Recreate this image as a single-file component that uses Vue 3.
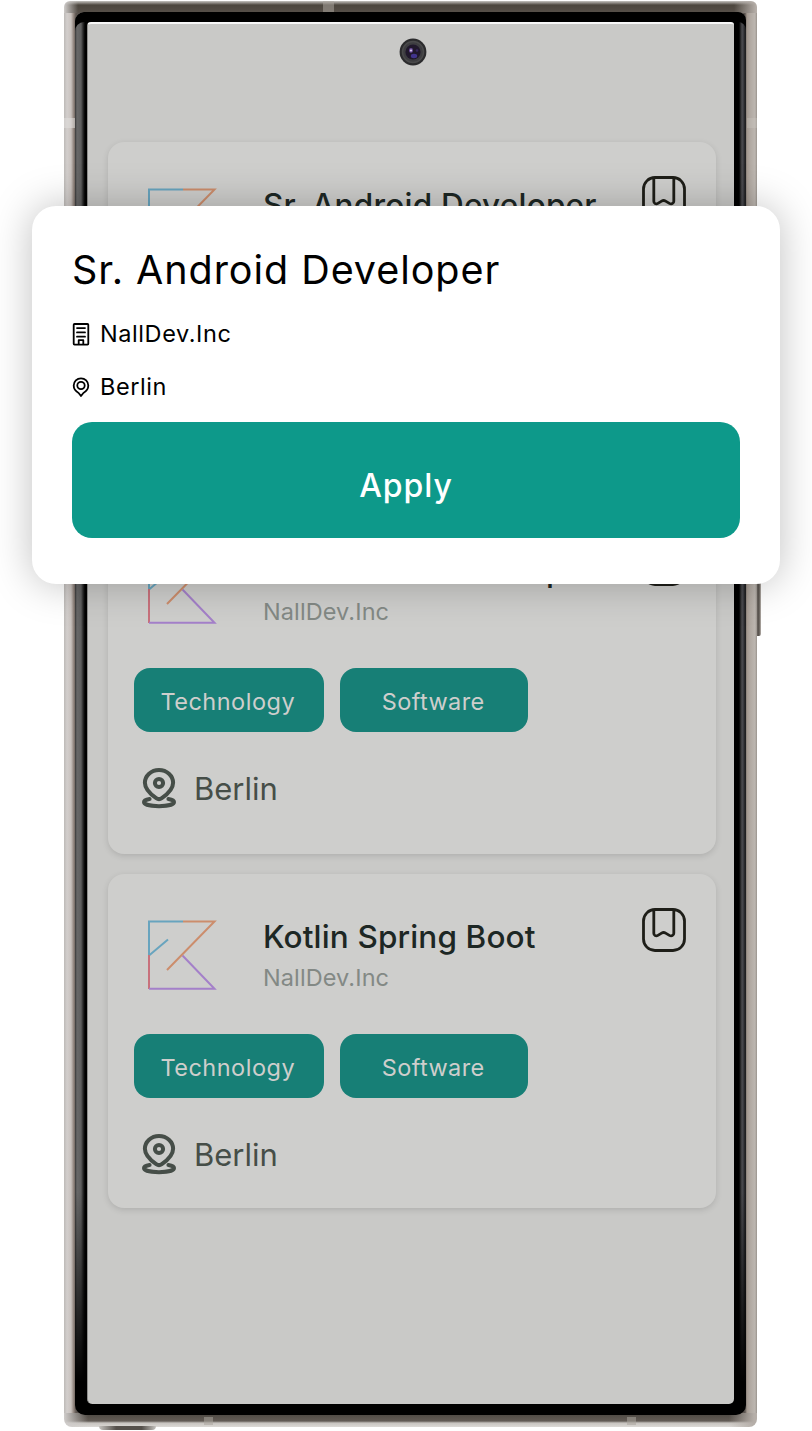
<script setup>
const jobs = [
  { title: 'Sr. Android Developer', cls: 'wide', size: 'tall' },
  { title: 'Sr. Android Developer', cls: 'wide', size: 'tall' },
  { title: 'Kotlin Spring Boot', cls: 'kotlin', size: 'short' },
]
</script>

<template>
  <main class="stage">
    <section class="phone">
      <span class="antenna top"></span>
      <span class="antenna left"></span>
      <span class="antenna right"></span>
      <span class="antenna low-left"></span>
      <span class="antenna low-right"></span>
      <span class="power"></span>
      <span class="tray"></span>
      <div class="bezel">
        <div class="screen">
          <svg class="camera" width="28" height="28" viewBox="0 0 28 28">
            <circle cx="14" cy="14" r="13.4" fill="#2b2b2d" />
            <circle cx="14" cy="14" r="10.5" fill="#3d3d40" stroke="#4a4a4b" stroke-width="1.5" />
            <circle cx="14" cy="14" r="7.6" fill="#20182b" />
            <ellipse cx="15" cy="18" rx="3.2" ry="2.2" fill="#41348c" />
            <ellipse cx="12" cy="12.4" rx="2" ry="2.3" fill="#6a4c9a" />
            <circle cx="12" cy="12.5" r="1.1" fill="#d5c8ec" />
            <circle cx="18" cy="12.5" r="1.3" fill="#36265d" />
          </svg>

          <article v-for="(job, i) in jobs" :key="i" class="card" :class="job.size">
            <header class="head">
              <svg class="logo" width="70" height="72" viewBox="0 0 70 72" fill="none" stroke-width="2">
                <path d="M35 2.400H1V36" stroke="#68a4be" />
                <path d="M1 36.500L20 20.500" stroke="#68a4be" />
                <path d="M1 36V70" stroke="#c8717c" />
                <path d="M1 69.800H66.500L34.500 36.500" stroke="#a480c9" />
                <path d="M35 2.400H66.500L19 51" stroke="#cc8d6c" />
              </svg>
              <div class="names">
                <h2 :class="job.cls">{{ job.title }}</h2>
                <p>NallDev.Inc</p>
              </div>
              <svg class="bookmark" width="44" height="44" viewBox="0 0 44 44" fill="none" stroke="#1e1e18" stroke-width="2.8" stroke-linejoin="round">
                <rect x="1.5" y="1.5" width="41" height="41" rx="11.5" />
                <path d="M11.8 2V25.2c0 2.3 2.1 3.400 4.100 2.200l3.700-2.300c1.500-.9 2.500-.9 4 0l3.800 2.300c2.100 1.200 4.400.1 4.400-2.200V2" />
              </svg>
            </header>
            <div class="tags">
              <span class="tag tech"><b>Technology</b></span>
              <span class="tag soft"><b>Software</b></span>
            </div>
            <div class="place">
              <svg width="36" height="41" viewBox="0 0 36 41" fill="none" stroke="#464e48" stroke-width="4">
                <path d="M14.2 30.2C7.7 25.7 2.9 20.8 2.9 14.8a14.1 12.8 0 0 1 28.2 0c0 6-4.8 10.9-11.3 15.4a5 5 0 0 1-5.6 0z" />
                <circle cx="17" cy="15" r="4.1" />
                <path d="M7.6 31C4.3 31.5 2 32.6 2 34c0 2.4 6.3 4.2 15 4.2S32 36.400 32 34c0-1.400-2.300-2.500-5.600-3" stroke-linecap="round" />
              </svg>
              <span>Berlin</span>
            </div>
          </article>
        </div>
      </div>
    </section>

    <section class="dialog">
      <h1>Sr. Android Developer</h1>
      <div class="line company">
        <svg width="18" height="24" viewBox="0 0 18 24" fill="none" stroke="#000" stroke-width="1.8" stroke-linejoin="round" stroke-linecap="round">
          <rect x="1.700" y="2" width="14.600" height="20.600" rx=".8" />
          <path d="M5 6.100h8M5 10.400h8M5 14.700h8M6.700 22.200v-4h4.600v4" />
        </svg>
        <span>NallDev.Inc</span>
      </div>
      <div class="line city">
        <svg width="18" height="22" viewBox="0 0 18 22" fill="none" stroke="#000" stroke-width="1.800">
          <path d="M9 20l-2.400-3C3.600 15.400 1.700 12.900 1.700 9.600a7.300 7.300 0 0 1 14.600 0c0 3.300-1.900 5.800-4.900 7.400z" stroke-linejoin="round" />
          <circle cx="9" cy="9.500" r="3.700" />
        </svg>
        <span>Berlin</span>
      </div>
      <button type="button"><span>Apply</span></button>
    </section>
  </main>
</template>

<style>
body { margin: 0; background: #fff; }
</style>

<style scoped>
* { box-sizing: border-box; }
h1, h2, p { margin: 0; }
.stage {
  position: relative;
  width: 812px;
  height: 1431px;
  padding: 1px 55px 0 64px;
  overflow: hidden;
  background: #fff;
  font-family: Inter, "Liberation Sans", sans-serif;
}
.phone {
  position: relative;
  height: 1426px;
  padding: 11px 11px 12px;
  border-radius: 6px 6px 8px 8px;
  background:
    linear-gradient(90deg, #cfccca, transparent 14px, transparent 670px, #b5aea8 692px) top / 100% 12px no-repeat,
    linear-gradient(90deg, #cfccca, transparent 24px, transparent 665px, #b5aea8 690px) bottom / 100% 14px no-repeat,
    linear-gradient(180deg, #c6c4c1 0, #8a8580 2px, #4c463e 4px, #57504a 12px) top / 100% 12px no-repeat,
    linear-gradient(180deg, #4b4640 0, #625b55 8px, #c7c3bf 10px, #dcd9d6 14px) bottom / 100% 14px no-repeat,
    linear-gradient(90deg, #bdbab7 0, #d2cecc 3px, #c9c2be 7px, #8a7e77 10px, #5b544f 12px, #5b544f 681px, #a39990 683px, #b0a8a1 686px, #bcb6b0 691px, #99938d 693px);
}
.bezel {
  height: 1403px;
  padding: 10px 12px 11px;
  border-radius: 9px 8px 10px 10px;
  background:
    linear-gradient(180deg, transparent 1180px, #000 1370px),
    linear-gradient(90deg, #393939 0, #686868 2px, #5f5f5f 6px, #2a2a2a 8px, #000 10px, #000 664px, #4b4b4e 667px, #444449 668px, #202022 670px);
  box-shadow: inset 0 10px #000, inset 0 -11px #000;
}
.screen {
  position: relative;
  height: 1382px;
  padding: 118px 18px 0 20px;
  border-top: 2px solid #f8f8f8;
  border-left: 1px solid #8f8f8d;
  border-radius: 4px 3px 5px 5px;
  background: #c9c9c7;
}
.camera { position: absolute; left: 310.500px; top: 14px; }
.card {
  height: 346px;
  margin-bottom: 20px;
  padding: 34px 30px 0 26px;
  border-radius: 16px;
  background: #cececc;
  box-shadow: 0 2px 6px rgba(0, 0, 0, .13);
}
.card.short { height: 334px; }
.head { display: flex; height: 126px; align-items: flex-start; }
.logo { margin: 11px 45px 0 14px; flex: none; }
.names { flex: 1; white-space: nowrap; color: #1d2724; }
h2 { height: 58px; line-height: 58px; font-size: 31.500px; font-weight: 500; }
h2.wide { letter-spacing: .22px; }
h2.kotlin { letter-spacing: .14px; }
.names p { line-height: 24px; font-size: 23.500px; letter-spacing: .1px; color: #838985; }
.bookmark { flex: none; }
.tags { display: flex; gap: 16px; margin-left: -.5px; }
.tag { height: 64px; border-radius: 16px; background: #177f76; color: #cececc; font-size: 23.500px; line-height: 68px; text-align: center; }
.tag b { font-weight: 400; }
.tech { width: 190.500px; letter-spacing: .5px; padding-right: 2px; }
.soft { width: 188px; letter-spacing: .4px; padding-right: 1.500px; }
.place { display: flex; height: 42px; margin: 36px 0 0 8px; align-items: flex-start; gap: 16px; color: #464e48; font-size: 31px; line-height: 42px; }

.antenna { position: absolute; background: #aaa49d; opacity: .55; }
.antenna.top { left: 259px; top: 0; width: 11px; height: 11px; }
.antenna.left { left: 0; top: 117px; width: 11px; height: 10px; background: #e0dfdc; }
.antenna.right { left: 683px; top: 117px; width: 10px; height: 10px; background: #d2ccc6; opacity: .3; }
.antenna.low-left { left: 140px; bottom: 2px; width: 9px; height: 8px; }
.antenna.low-right { left: 563px; bottom: 2px; width: 9px; height: 8px; }
.power { position: absolute; left: 693px; top: 500px; width: 4px; height: 135px; border-radius: 0 2px 2px 0; background: linear-gradient(90deg, #6b6560, #55504b 50%, #bbb5af); }
.tray { position: absolute; left: 35px; top: 1425px; width: 57px; height: 4px; border-radius: 0 0 6px 6px; background: linear-gradient(90deg, #c5c2be, #55504b 30%, #55504b 75%, #c5c2be); }

.dialog {
  position: absolute;
  left: 32px;
  top: 206px;
  width: 748px;
  height: 378px;
  padding: 36px 40px 46px;
  border-radius: 24px;
  background: #fff;
  color: #000;
  box-shadow: 0 0 40px rgba(0, 0, 0, .25);
}
h1 { height: 56px; line-height: 56px; font-size: 39.500px; font-weight: 400; letter-spacing: .95px; white-space: nowrap; }
.line { display: flex; align-items: center; gap: 10px; height: 36px; font-size: 23.500px; letter-spacing: .58px; line-height: 36px; }
.company { margin-top: 18px; }
.city { margin-top: 17px; }
button { display: block; width: 668px; height: 116px; margin-top: 17px; padding: 10px 0 0; border: 0; border-radius: 20px; background: #0d998a; color: #fff; font: 500 32px Inter, sans-serif; letter-spacing: .9px; }
</style>
